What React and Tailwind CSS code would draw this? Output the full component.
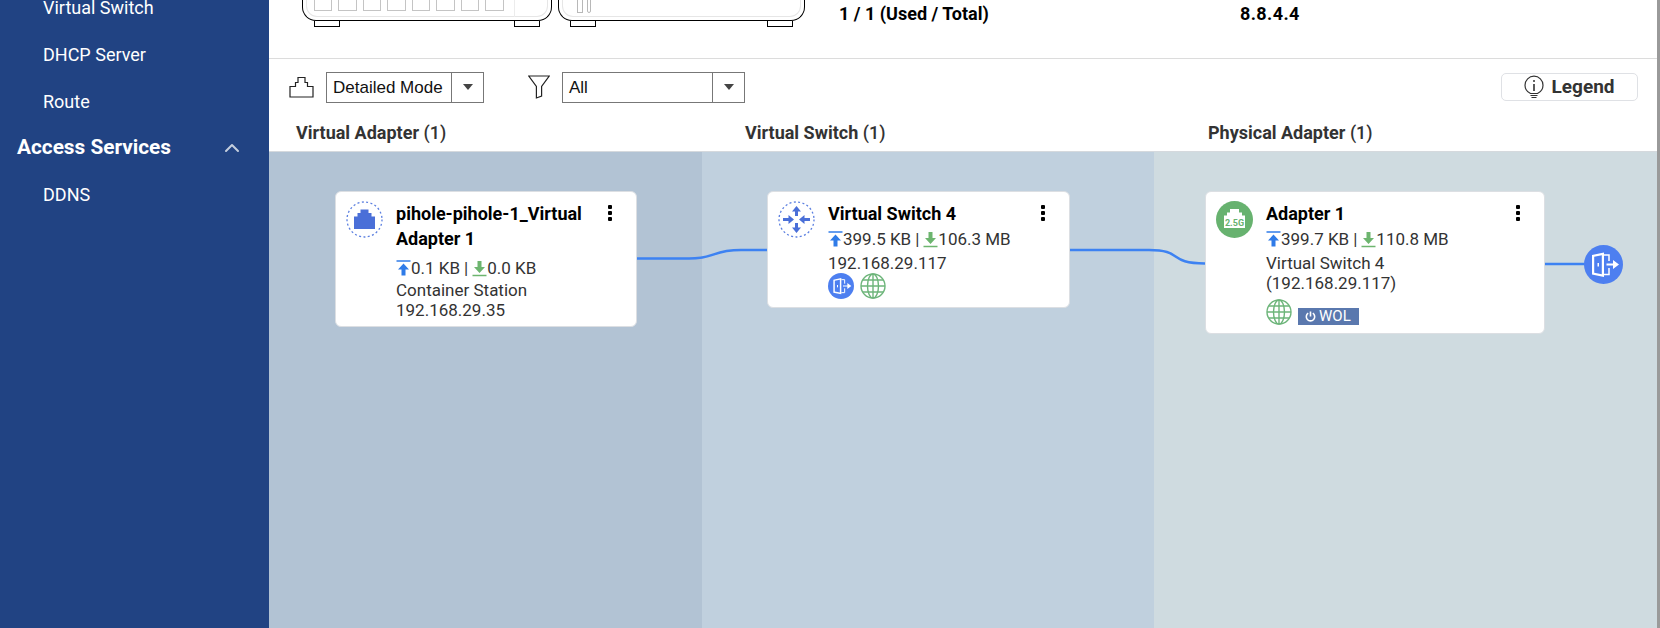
import React from 'react';
import { ChevronUp } from 'lucide-react';

const FONT = "font-['Roboto',sans-serif]";

function Caret() {
  return <span className="w-0 h-0 border-x-[5px] border-x-transparent border-t-[6px] border-t-[#444]" />;
}

function Select({ label, width, arrowWidth = 'w-[32px]' }) {
  return (
    <div className={`flex h-[31px] items-stretch border border-[#777] text-[17px] text-[#111] ${width}`}>
      <span className="flex-1 flex items-center pl-[6px] pt-px font-['Liberation_Sans',sans-serif]">{label}</span>
      <span className={`flex items-center justify-center border-l border-[#777] ${arrowWidth}`}>
        <Caret />
      </span>
    </div>
  );
}

function PortOutline() {
  return (
    <svg width="25" height="22" viewBox="0 0 25 22" fill="none" stroke="#222" strokeWidth="1.2">
      <path d="M1 21V10.5H6.5V6.5H9V1.5H16V6.5H18.5V10.5H24V21Z" />
    </svg>
  );
}

function FilterIcon() {
  return (
    <svg width="22" height="24" viewBox="0 0 22 24" fill="none" stroke="#222" strokeWidth="1.2">
      <path d="M0.8 1H21.2L13.6 11.5V21L8.4 23V11.5Z" />
    </svg>
  );
}

function BulbIcon() {
  return (
    <svg width="20" height="25" viewBox="0 0 20 25" fill="none" stroke="#333" strokeWidth="1.2">
      <path d="M6.5 18.5C3.5 17 1 14.2 1 10.2A9 9 0 0 1 19 10.2C19 14.2 16.5 17 13.5 18.5Z" />
      <path d="M10 9V16" strokeWidth="1.6" />
      <circle cx="10" cy="6" r="1" fill="#333" stroke="none" />
      <path d="M6.5 20.5H13.5M7.5 22.5H12.5" />
    </svg>
  );
}

function Device({ width, children }) {
  return (
    <div className={`relative shrink-0 h-[21px] ${width}`}>
      <div className="absolute inset-x-0 bottom-0 h-[60px] rounded-b-[14px] border-[1.5px] border-t-0 border-black bg-white overflow-hidden">
        <div className="absolute inset-x-[3px] bottom-[3px] h-[40px] rounded-b-[11px] border border-t-0 border-[#e6e6e6]" />
        {children}
      </div>
      <div className="absolute left-[12px] top-[21px] h-[6px] w-[26px] border-[1.5px] border-t-0 border-black bg-white" />
      <div className="absolute right-[12px] top-[21px] h-[6px] w-[26px] border-[1.5px] border-t-0 border-black bg-white" />
    </div>
  );
}

function Up() {
  return (
    <svg width="15" height="17" viewBox="0 0 15 17" className="shrink-0">
      <path d="M0.5 1H14.5" stroke="#2f7be8" strokeWidth="1.5" />
      <path d="M7.5 3.5L13 9.5H9.5V15.5H5.5V9.5H2Z" fill="#2f7be8" />
    </svg>
  );
}

function Down() {
  return (
    <svg width="15" height="17" viewBox="0 0 15 17" className="shrink-0">
      <path d="M0.5 15.5H14.5" stroke="#6db56f" strokeWidth="1.5" />
      <path d="M7.5 13L2 7H5.5V1H9.5V7H13Z" fill="#6db56f" />
    </svg>
  );
}

function Traffic({ up, down }) {
  return (
    <div className="flex items-center h-[20px] text-[17px] leading-[20px] text-[#333]">
      <Up />
      <span>{up}</span>
      <span className="mx-[4px]">|</span>
      <Down />
      <span>{down}</span>
    </div>
  );
}

function DottedRing({ children }) {
  return (
    <svg width="37" height="37" viewBox="0 0 37 37" className="shrink-0">
      <circle cx="18.5" cy="18.5" r="17.5" fill="none" stroke="#5b7fe0" strokeWidth="1.3" strokeDasharray="2 2.4" />
      {children}
    </svg>
  );
}

function VirtualAdapterIcon() {
  return (
    <DottedRing>
      <path d="M8 28V15.5H11.5V12H14.5V8.5H22.5V12H25.5V15.5H29V28Z" fill="#4a6fd8" />
    </DottedRing>
  );
}

function SwitchIcon() {
  return (
    <DottedRing>
      <g fill="#4a6fd8">
        <path d="M18.5 5L23 10.5H20V15H17V10.5H14Z" />
        <path d="M18.5 32L14 26.5H17V22H20V26.5H23Z" />
        <path d="M16 18.5L10.5 14V17H5V20H10.5V23Z" />
        <path d="M21 18.5L26.5 14V17H32V20H26.5V23Z" />
      </g>
    </DottedRing>
  );
}

function AdapterIcon() {
  return (
    <svg width="37" height="37" viewBox="0 0 37 37" className="shrink-0">
      <circle cx="18.5" cy="18.5" r="18.5" fill="#67b26f" />
      <path d="M8 27V14.5H11V11.5H14V8H23V11.5H26V14.5H29V27Z" fill="#fff" />
      <text x="18.5" y="24.5" textAnchor="middle" fontSize="9" fontWeight="700" fill="#67b26f" fontFamily="Roboto, sans-serif">2.5G</text>
    </svg>
  );
}

function ExitIcon({ size }) {
  return (
    <svg width={size} height={size} viewBox="0 0 39 39" className="shrink-0">
      <circle cx="19.5" cy="19.5" r="19.5" fill="#4d7ff0" />
      <path d="M8 10L20 7.5V32L8 29.5Z M10.2 11.8V27.7L17.8 29.2V10.2Z" fill="#fff" fillRule="evenodd" />
      <rect x="13.5" y="18" width="1.5" height="3.5" fill="#fff" />
      <path d="M20 10H25V16M20 29.5H25V23" fill="none" stroke="#fff" strokeWidth="1.5" />
      <path d="M22.5 18.6H29V15L35 19.5L29 24V20.4H22.5Z" fill="#fff" />
    </svg>
  );
}

function Globe() {
  return (
    <svg width="26" height="26" viewBox="0 0 26 26" fill="none" stroke="#6db57a" strokeWidth="1.4" className="shrink-0">
      <circle cx="13" cy="13" r="12" />
      <ellipse cx="13" cy="13" rx="5.5" ry="12" />
      <path d="M13 1V25M1 13H25M3 7H23M3 19H23" />
    </svg>
  );
}

function WolBadge() {
  return (
    <span className="flex items-center gap-[3px] h-[17px] w-[61px] pl-[7px] bg-[#5a78ae] text-white text-[15px] leading-none">
      <svg width="11" height="11" viewBox="0 0 11 11" fill="none" stroke="#fff" strokeWidth="1.6">
        <path d="M3.2 2.2A4.2 4.2 0 1 0 7.8 2.2" />
        <path d="M5.5 0.5V5.5" />
      </svg>
      WOL
    </span>
  );
}

function Card({ icon, width, title, children }) {
  return (
    <div className={`relative z-10 flex gap-[13px] rounded-[6px] border border-[#dcdfe3] bg-white pl-[10px] pr-[9px] pt-[9px] ${width}`}>
      {icon}
      <div className="flex-1 min-w-0">
        <div className="pr-[28px] text-[18px] leading-[25px] font-bold text-black">{title}</div>
        {children}
      </div>
      <div className="absolute right-[24px] top-[13px] flex flex-col gap-[2px]">
        <span className="h-[4px] w-[4px] rounded-[1px] bg-black" />
        <span className="h-[4px] w-[4px] rounded-[1px] bg-black" />
        <span className="h-[4px] w-[4px] rounded-[1px] bg-black" />
      </div>
    </div>
  );
}

function Links() {
  return (
    <svg className="absolute inset-0 h-full w-full pointer-events-none" fill="none" stroke="#3d82f2" strokeWidth="2.5">
      <path d="M360 106.5H420C448 106.5 442 98 472 98H510" />
      <path d="M790 98H880C915 98 898 111.5 936 111.5H960" />
      <path d="M1270 112H1320" />
    </svg>
  );
}

function ColumnLabel({ name, width, pad }) {
  return (
    <div className={`text-[18px] font-bold text-[#333] ${width} ${pad}`}>
      {name} <span className="font-medium">(1)</span>
    </div>
  );
}

export default function App() {
  return (
    <div className={`flex h-[628px] w-[1660px] overflow-hidden bg-white ${FONT}`}>
      {/* Left nav */}
      <aside className="flex w-[269px] shrink-0 flex-col bg-[#214383] text-white text-[18px]">
        <div className="-mt-[16px] flex h-[47px] items-center pl-[43px]">Virtual Switch</div>
        <div className="flex h-[47px] items-center pl-[43px]">DHCP Server</div>
        <div className="flex h-[47px] items-center pl-[43px]">Route</div>
        <div className="flex h-[46px] items-center justify-between pl-[17px] pr-[25px] text-[20.8px] font-bold">
          Access Services
          <ChevronUp size={24} strokeWidth={2} className="text-[#c4cede]" />
        </div>
        <div className="flex h-[46px] items-center pl-[43px]">DDNS</div>
      </aside>

      <main className="flex min-w-0 flex-1 flex-col border-r-[3px] border-[#9a9a9a]">
        {/* Cut-off summary row */}
        <div className="flex h-[59px] shrink-0 items-start overflow-hidden border-b border-[#dcdcdc] text-[18px] font-bold text-black">
          <Device width="w-[250px] ml-[33px]">
            <div className="absolute bottom-[9px] left-[10.5px] flex gap-[6px]">
              {[0, 1, 2, 3, 4, 5, 6, 7].map((i) => (
                <span key={i} className="h-[20px] w-[18.5px] border border-[#c4c4c4]" />
              ))}
            </div>
            <div className="absolute bottom-[3px] right-[36px] h-[40px] border-l border-[#ececec]" />
          </Device>
          <Device width="w-[247px] ml-[6px]">
            <div className="absolute bottom-[7px] left-[17.5px] flex gap-[4px]">
              <span className="h-[15px] w-[6px] border border-[#b8b8b8]" />
              <span className="h-[15px] w-[4px] rounded-full border border-[#b8b8b8]" />
            </div>
          </Device>
          <div className="ml-[34px] w-[401px] leading-[28px]">1 / 1 (Used / Total)</div>
          <div className="leading-[28px] tracking-[0.4px]">8.8.4.4</div>
        </div>

        {/* Toolbar */}
        <div className="flex h-[56px] shrink-0 items-center pl-[20px] pr-[19px]">
          <PortOutline />
          <div className="ml-[12px]"><Select label="Detailed Mode" width="w-[158px]" /></div>
          <div className="ml-[44px]"><FilterIcon /></div>
          <div className="ml-[12px]"><Select label="All" width="w-[183px]" /></div>
          <button className="ml-auto flex h-[28px] w-[137px] items-center justify-center gap-[7px] rounded-[5px] border border-[#dfe1e5] text-[19px] font-bold text-[#333]">
            <BulbIcon />
            Legend
          </button>
        </div>

        {/* Column labels */}
        <div className="flex h-[37px] shrink-0 items-center border-b border-[#d5d9dd] pb-px">
          <ColumnLabel name="Virtual Adapter" width="w-[476px]" pad="pl-[27px]" />
          <ColumnLabel name="Virtual Switch" width="w-[463px]" pad="" />
          <ColumnLabel name="Physical Adapter" width="flex-1" pad="" />
        </div>

        {/* Topology canvas */}
        <div className="relative flex flex-1">
          <section className="w-[433px] bg-[#b2c3d4] pl-[66px] pt-[39px]">
            <Card
              width="w-[302px] h-[136px]"
              icon={<VirtualAdapterIcon />}
              title="pihole-pihole-1_Virtual Adapter 1"
            >
              <div className="mt-[7px]"><Traffic up="0.1 KB" down="0.0 KB" /></div>
              <div className="mt-[2px] text-[17px] leading-[20px] text-[#333]">Container Station</div>
              <div className="text-[17px] leading-[20px] text-[#333]">192.168.29.35</div>
            </Card>
          </section>
          <section className="w-[452px] bg-[#c0d0de] pl-[65px] pt-[39px]">
            <Card width="w-[303px] h-[117px]" icon={<SwitchIcon />} title="Virtual Switch 4">
              <div className="mt-[3px]"><Traffic up="399.5 KB" down="106.3 MB" /></div>
              <div className="mt-[4px] text-[17px] leading-[20px] text-[#333]">192.168.29.117</div>
              <div className="flex items-center gap-[6px]">
                <ExitIcon size={26} />
                <Globe />
              </div>
            </Card>
          </section>
          <section className="flex-1 bg-[#cfdbe0] pl-[51px] pt-[39px]">
            <Card width="w-[340px] h-[143px]" icon={<AdapterIcon />} title="Adapter 1">
              <div className="mt-[3px]"><Traffic up="399.7 KB" down="110.8 MB" /></div>
              <div className="mt-[4px] text-[17px] leading-[20px] text-[#333]">Virtual Switch 4</div>
              <div className="text-[17px] leading-[20px] text-[#333]">(192.168.29.117)</div>
              <div className="mt-[6px] flex items-end gap-[6px]">
                <Globe />
                <WolBadge />
              </div>
            </Card>
          </section>
          <Links />
          {/* Port node sits on the link line */}
          <div className="absolute left-[1315px] top-[93px]"><ExitIcon size={39} /></div>
        </div>
      </main>
    </div>
  );
}
